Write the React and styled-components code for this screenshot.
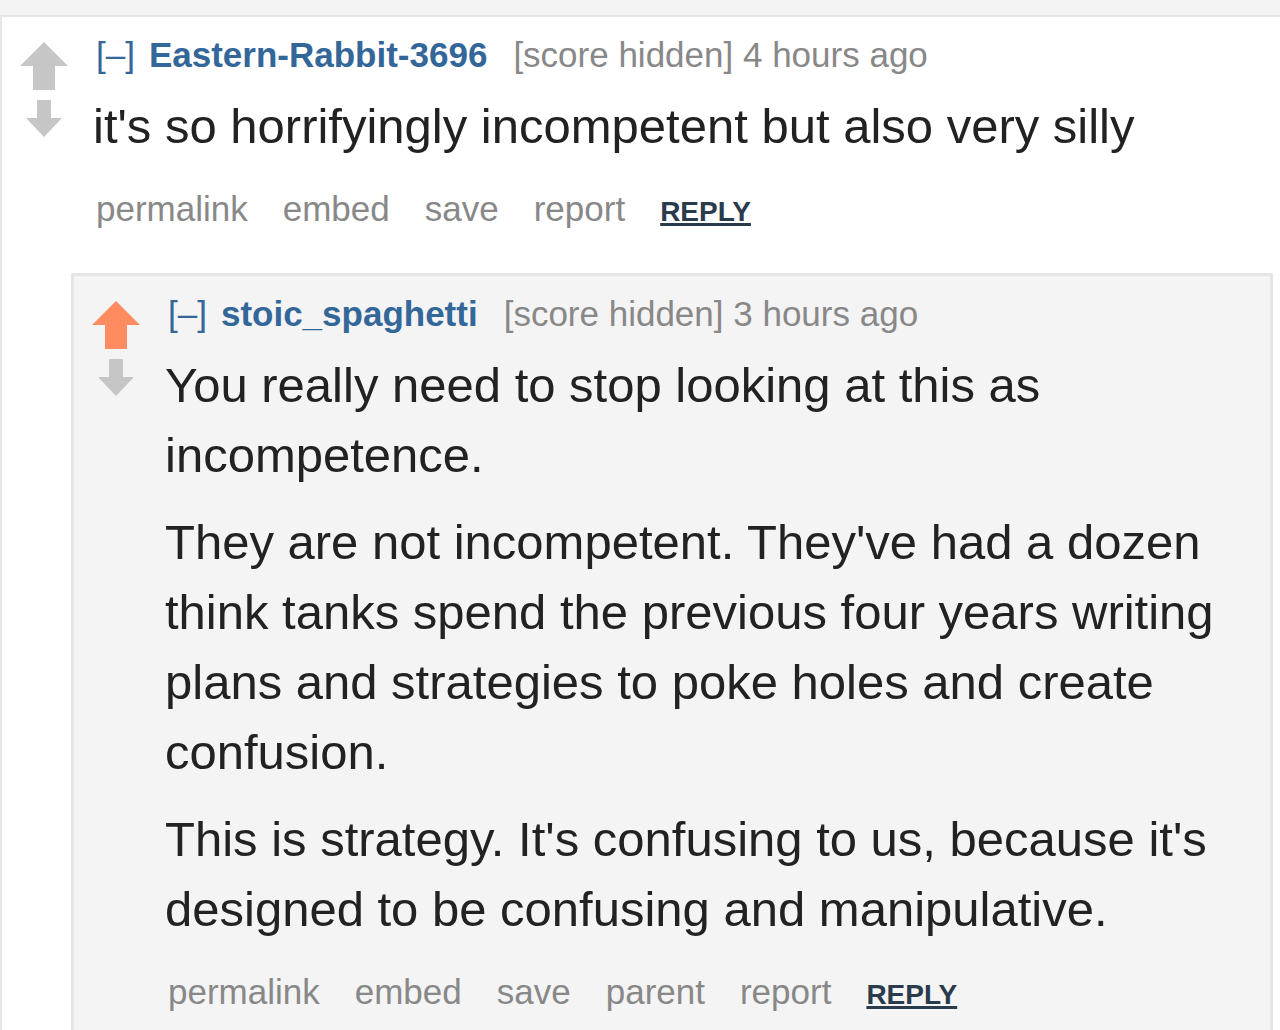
import React from 'react';
import styled, { createGlobalStyle } from 'styled-components';

const GlobalStyle = createGlobalStyle`
  html, body {
    margin: 0;
    padding: 0;
  }
  body {
    background: #f4f4f4;
    font-family: "Liberation Sans", Arial, sans-serif;
    overflow: hidden;
  }
`;

const Page = styled.div`
  padding-top: 15px;
`;

const CommentBox = styled.div`
  background: ${({ nested }) => (nested ? '#f4f4f4' : '#ffffff')};
  border: ${({ nested }) => (nested ? '3px' : '2px')} solid #e6e6e6;
  border-right-width: ${({ nested }) => (nested ? '3px' : '0')};
  border-bottom-width: 0;
  padding-top: 17px;
  padding-bottom: 60px;
`;

const Row = styled.div`
  display: flex;
  align-items: flex-start;
  padding-left: 17px;
  padding-right: 12px;
`;

const MidCol = styled.div`
  width: 49px;
  flex: 0 0 49px;
  margin-right: 24px;
  padding-top: 8px;
  display: flex;
  flex-direction: column;
  align-items: center;
  gap: 10px;
`;

const Entry = styled.div`
  flex: 1;
  min-width: 0;
`;

const Tagline = styled.div`
  padding-left: 4px;
  font-size: 35px;
  line-height: 42px;
  color: #888888;
  white-space: nowrap;
`;

const Expand = styled.span`
  color: #336699;
  margin-right: 14px;
`;

const Author = styled.span`
  color: #336699;
  font-weight: bold;
  margin-right: 26px;
`;

const Body = styled.div`
  margin-top: 15px;
  padding-left: 1px;
  font-size: 49px;
  line-height: 70px;
  color: #222222;

  p {
    margin: 0 0 17px;
  }
  p:last-child {
    margin-bottom: 0;
  }
`;

const Buttons = styled.ul`
  list-style: none;
  margin: 27px 0 0;
  padding: 0 0 0 4px;
  display: flex;
  align-items: baseline;
  gap: 35px;
  font-size: 35px;
  line-height: 42px;
  color: #888888;
`;

const Reply = styled.li`
  font-size: 28px;
  font-weight: bold;
  color: #2a3b4c;
  text-decoration: underline;
  text-decoration-thickness: 3px;
  text-underline-offset: 2px;
`;

const Children = styled.div`
  margin: 40px 7px 0 69px;
`;

const UpArrow = ({ active }) => (
  <svg width="48" height="48" viewBox="0 0 48 48">
    <path d="M24 0 L48 24 L35 24 L35 48 L13 48 L13 24 L0 24 Z" fill={active ? '#ff8b60' : '#c6c6c6'} />
  </svg>
);

const DownArrow = () => (
  <svg width="36" height="37" viewBox="0 0 36 37">
    <path d="M11 0 H25 V18 H36 L18 37 L0 18 H11 Z" fill="#c6c6c6" />
  </svg>
);

const Comment = ({ comment, nested, children }) => (
  <CommentBox nested={nested}>
    <Row>
      <MidCol>
        <UpArrow active={comment.upvoted} />
        <DownArrow />
      </MidCol>
      <Entry>
        <Tagline>
          <Expand>[–]</Expand>
          <Author>{comment.author}</Author>
          [score hidden] {comment.time}
        </Tagline>
        <Body>
          {comment.paragraphs.map((text, i) => (
            <p key={i}>{text}</p>
          ))}
        </Body>
        <Buttons>
          {comment.buttons.map(label => (
            <li key={label}>{label}</li>
          ))}
          <Reply>REPLY</Reply>
        </Buttons>
      </Entry>
    </Row>
    {children && <Children>{children}</Children>}
  </CommentBox>
);

const parent = {
  author: 'Eastern-Rabbit-3696',
  time: '4 hours ago',
  paragraphs: ["it's so horrifyingly incompetent but also very silly"],
  buttons: ['permalink', 'embed', 'save', 'report'],
};

const reply = {
  author: 'stoic_spaghetti',
  time: '3 hours ago',
  upvoted: true,
  paragraphs: [
    'You really need to stop looking at this as incompetence.',
    "They are not incompetent. They've had a dozen think tanks spend the previous four years writing plans and strategies to poke holes and create confusion.",
    "This is strategy. It's confusing to us, because it's designed to be confusing and manipulative.",
  ],
  buttons: ['permalink', 'embed', 'save', 'parent', 'report'],
};

export default function App() {
  return (
    <>
      <GlobalStyle />
      <Page>
        <Comment comment={parent}>
          <Comment comment={reply} nested />
        </Comment>
      </Page>
    </>
  );
}
